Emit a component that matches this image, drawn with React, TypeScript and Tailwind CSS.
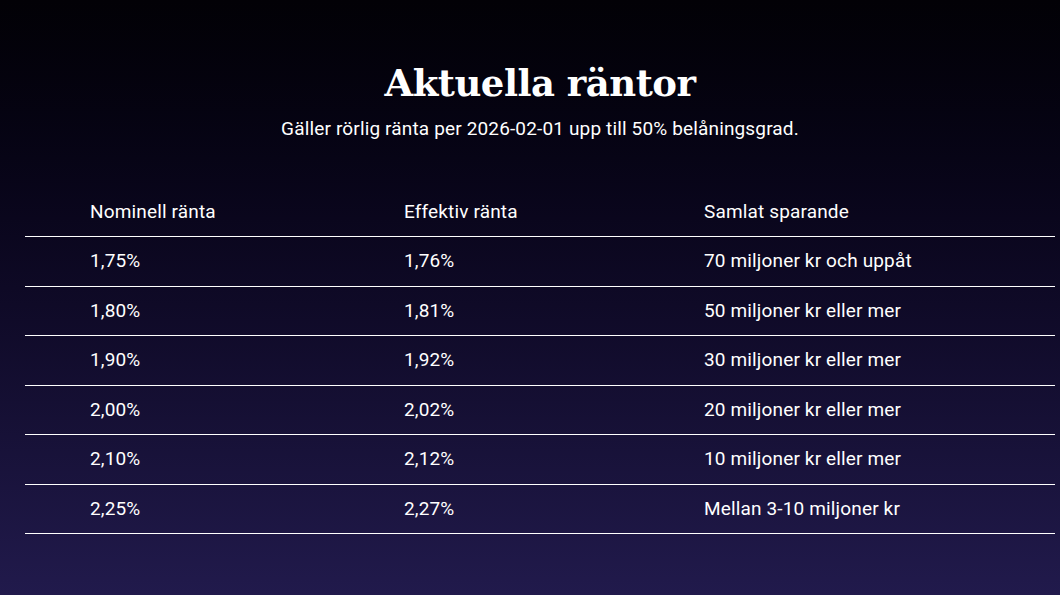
const rows = [
  ["1,75%", "1,76%", "70 miljoner kr och uppåt"],
  ["1,80%", "1,81%", "50 miljoner kr eller mer"],
  ["1,90%", "1,92%", "30 miljoner kr eller mer"],
  ["2,00%", "2,02%", "20 miljoner kr eller mer"],
  ["2,10%", "2,12%", "10 miljoner kr eller mer"],
  ["2,25%", "2,27%", "Mellan 3-10 miljoner kr"],
]

export default function App() {
  return (
    <div className="h-[595px] w-[1060px] overflow-hidden bg-gradient-to-b from-[#020106] to-[#211a4c] text-white font-['Roboto',sans-serif]">
      <div className="ml-[25px] mr-[5px]">
        <div className="pt-[59px] text-center">
          <h1 className="font-['DejaVu_Serif',serif] text-[37px] font-bold leading-[48px] tracking-[-0.5px]">
            Aktuella räntor
          </h1>
          <p className="mt-[10px] text-[19px] leading-[24px] tracking-[0.15px]">
            Gäller rörlig ränta per 2026-02-01 upp till 50% belåningsgrad.
          </p>
        </div>
        <div className="mt-[48px]">
          <div className="grid h-[48px] grid-cols-[314px_300px_1fr] items-center border-b border-white pl-[65px] text-[19px] tracking-[0.15px]">
            <span>Nominell ränta</span>
            <span>Effektiv ränta</span>
            <span>Samlat sparande</span>
          </div>
          {rows.map((r) => (
            <div
              key={r[0]}
              className="grid h-[49.5px] grid-cols-[314px_300px_1fr] items-center border-b border-white pl-[65px] text-[19px] tracking-[0.15px]"
            >
              <span>{r[0]}</span>
              <span>{r[1]}</span>
              <span>{r[2]}</span>
            </div>
          ))}
        </div>
      </div>
    </div>
  )
}
